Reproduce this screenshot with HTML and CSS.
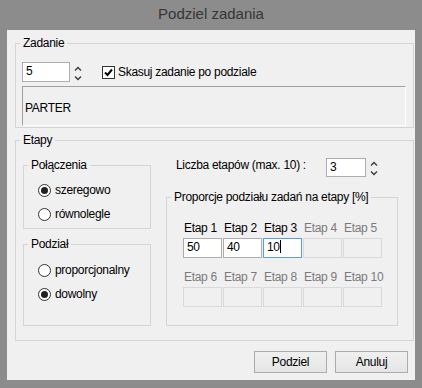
FILE: index.html
```html
<!DOCTYPE html>
<html lang="pl">
<head>
    <meta charset="UTF-8">
    <title>Podziel zadania</title>
    <link rel="stylesheet" href="styles.css">
</head>
<body>
    <div class="window">
        <div class="titlebar">Podziel zadania</div>

        <div class="client">
            <fieldset class="group group-task">
                <legend>Zadanie</legend>
                <div class="task-body">
                    <div class="task-row">
                        <span class="field field-task">5</span>
                        <svg class="spin" width="8" height="20" viewBox="0 0 8 20">
                            <path d="M1 8.5 L4 5.5 L7 8.5 M1 14.5 L4 17.5 L7 14.5"/>
                        </svg>
                        <label class="check">
                            <span class="checkbox">
                                <svg width="11" height="11" viewBox="0 0 11 11"><path d="M2 5.5 L4.5 8 L9 2.5"/></svg>
                            </span>
                            Skasuj zadanie po podziale
                        </label>
                    </div>
                    <div class="task-name">PARTER</div>
                </div>
            </fieldset>

            <fieldset class="group group-stages">
                <legend>Etapy</legend>
                <div class="stages-body">
                    <div class="stages-left">
                        <fieldset class="group group-join">
                            <legend>Połączenia</legend>
                            <div class="radio-list radio-join">
                                <label class="radio checked"><span class="dot"></span>szeregowo</label>
                                <label class="radio"><span class="dot"></span>równolegle</label>
                            </div>
                        </fieldset>
                        <fieldset class="group group-split">
                            <legend>Podział</legend>
                            <div class="radio-list radio-split">
                                <label class="radio"><span class="dot"></span>proporcjonalny</label>
                                <label class="radio checked"><span class="dot"></span>dowolny</label>
                            </div>
                        </fieldset>
                    </div>

                    <div class="stages-right">
                        <div class="count-row">
                            <span class="count-label">Liczba etapów (max. 10) :</span>
                            <span class="field field-count">3</span>
                            <svg class="spin" width="8" height="19" viewBox="0 0 8 19">
                                <path d="M1 7.5 L4 4.5 L7 7.5 M1 13.5 L4 16.5 L7 13.5"/>
                            </svg>
                        </div>
                        <fieldset class="group group-props">
                            <legend>Proporcje podziału zadań na etapy [%]</legend>
                            <div class="props-grid">
                                <span class="stage-label">Etap 1</span>
                                <span class="stage-label">Etap 2</span>
                                <span class="stage-label">Etap 3</span>
                                <span class="stage-label disabled">Etap 4</span>
                                <span class="stage-label disabled">Etap 5</span>
                                <span class="field stage-box">50</span>
                                <span class="field stage-box">40</span>
                                <span class="field stage-box focused">10<i class="caret"></i></span>
                                <span class="field stage-box disabled"></span>
                                <span class="field stage-box disabled"></span>

                                <span class="stage-label disabled second">Etap 6</span>
                                <span class="stage-label disabled second">Etap 7</span>
                                <span class="stage-label disabled second">Etap 8</span>
                                <span class="stage-label disabled second">Etap 9</span>
                                <span class="stage-label disabled second">Etap 10</span>
                                <span class="field stage-box disabled"></span>
                                <span class="field stage-box disabled"></span>
                                <span class="field stage-box disabled"></span>
                                <span class="field stage-box disabled"></span>
                                <span class="field stage-box disabled"></span>
                            </div>
                        </fieldset>
                    </div>
                </div>
            </fieldset>

            <div class="buttons">
                <button class="btn">Podziel</button>
                <button class="btn">Anuluj</button>
            </div>
        </div>
    </div>
</body>
</html>
```

FILE: styles.css
```css
body, html {
    margin: 0;
    padding: 0;
    background-color: #8c8c8c;
    font-family: 'Liberation Sans', Arial, sans-serif;
    font-size: 12px;
    letter-spacing: -0.3px;
    color: #000;
}

.window {
    width: 422px;
    height: 388px;
}

.titlebar {
    height: 30px;
    line-height: 28px;
    text-align: center;
    font-size: 15px;
    letter-spacing: 0;
    color: #353535;
}

.client {
    margin: 0 7px;
    width: 408px;
    height: 350px;
    background-color: #f0f0f0;
    overflow: hidden;
}

/* group boxes */
.group {
    margin: 0;
    padding: 0;
    min-width: 0;
    border: 1px solid #d5d5d5;
    box-sizing: border-box;
}

.group legend {
    margin-left: 4px;
    padding: 0 3px;
    line-height: 15px;
    height: 15px;
    font-size: 12px;
}

.group-task {
    margin: 6px 0 0 8px;
    width: 399px;
}

.task-body {
    padding: 11px 0 1px 6px;
}

.task-row {
    display: flex;
    align-items: center;
    height: 20px;
}

.field {
    display: block;
    box-sizing: border-box;
    border: 1px solid #abadb3;
    background-color: #fff;
    line-height: 17px;
    padding-left: 3px;
}

.field-task {
    width: 48px;
    height: 20px;
}

.spin {
    display: block;
    margin-left: 4px;
    align-self: flex-start;
}

.spin path {
    fill: none;
    stroke: #3c3c3c;
    stroke-width: 1.4;
}

.check {
    display: flex;
    align-items: center;
    margin-left: 20px;
    gap: 3px;
}

.checkbox {
    display: block;
    width: 13px;
    height: 13px;
    box-sizing: border-box;
    border: 1px solid #333;
    background-color: #fff;
}

.checkbox svg {
    display: block;
}

.checkbox path {
    fill: none;
    stroke: #000;
    stroke-width: 2;
}

.task-name {
    margin-top: 4px;
    width: 384px;
    height: 40px;
    box-sizing: border-box;
    border-top: 1px solid #a0a0a0;
    border-left: 1px solid #a0a0a0;
    border-right: 1px solid #fff;
    border-bottom: 1px solid #fff;
    padding: 14px 0 0 2px;
    line-height: 15px;
}

/* stages */
.group-stages {
    margin: 5px 0 0 8px;
    width: 399px;
}

.stages-body {
    display: flex;
    gap: 15px;
    padding: 10px 0 14px 7px;
}

.stages-left {
    display: flex;
    flex-direction: column;
    gap: 8px;
    width: 128px;
}

.radio-list {
    padding-left: 14px;
}

.radio-join {
    padding-top: 5px;
    padding-bottom: 2px;
}

.radio-split {
    padding-top: 6px;
    padding-bottom: 19px;
}

.radio {
    display: flex;
    align-items: center;
    height: 24px;
    gap: 4px;
}

.dot {
    display: block;
    width: 13px;
    height: 13px;
    box-sizing: border-box;
    border: 1px solid #333;
    border-radius: 50%;
    background-color: #fff;
    position: relative;
}

.radio.checked .dot::after {
    content: "";
    position: absolute;
    left: 2px;
    top: 2px;
    width: 7px;
    height: 7px;
    border-radius: 50%;
    background-color: #222;
}

.stages-right {
    width: 232px;
}

.count-row {
    display: flex;
    align-items: flex-start;
    padding-left: 10px;
    height: 19px;
}

.count-label {
    width: 150px;
    line-height: 15px;
}

.field-count {
    width: 40px;
    height: 19px;
    line-height: 16px;
}

.group-props {
    margin-top: 13px;
}

.props-grid {
    display: grid;
    grid-template-columns: repeat(5, 40px);
    grid-template-rows: 15px 20px 25px 20px;
    row-gap: 2px;
    padding: 16px 0 18px 16px;
}

.stage-label {
    line-height: 15px;
    padding-left: 1px;
    white-space: nowrap;
}

.stage-label.second {
    align-self: end;
}

.stage-label.disabled {
    color: #7a7a7a;
}

.stage-box {
    width: 39px;
    height: 20px;
}

.stage-box.focused {
    border-color: #569de5;
}

.stage-box.disabled {
    background-color: #f0f0f0;
    border-color: #d9d9d9;
}

.caret {
    display: inline-block;
    width: 1px;
    height: 13px;
    background-color: #000;
    vertical-align: -2px;
}

/* dialog buttons */
.buttons {
    display: flex;
    justify-content: flex-end;
    gap: 8px;
    margin-top: 10px;
    padding-right: 7px;
}

.btn {
    width: 73px;
    height: 22px;
    padding: 0;
    border: 1px solid #acacac;
    background: linear-gradient(#f0f0f0, #e5e5e5);
    font-family: 'Liberation Sans', Arial, sans-serif;
    font-size: 12px;
    letter-spacing: -0.3px;
    color: #000;
}
```
